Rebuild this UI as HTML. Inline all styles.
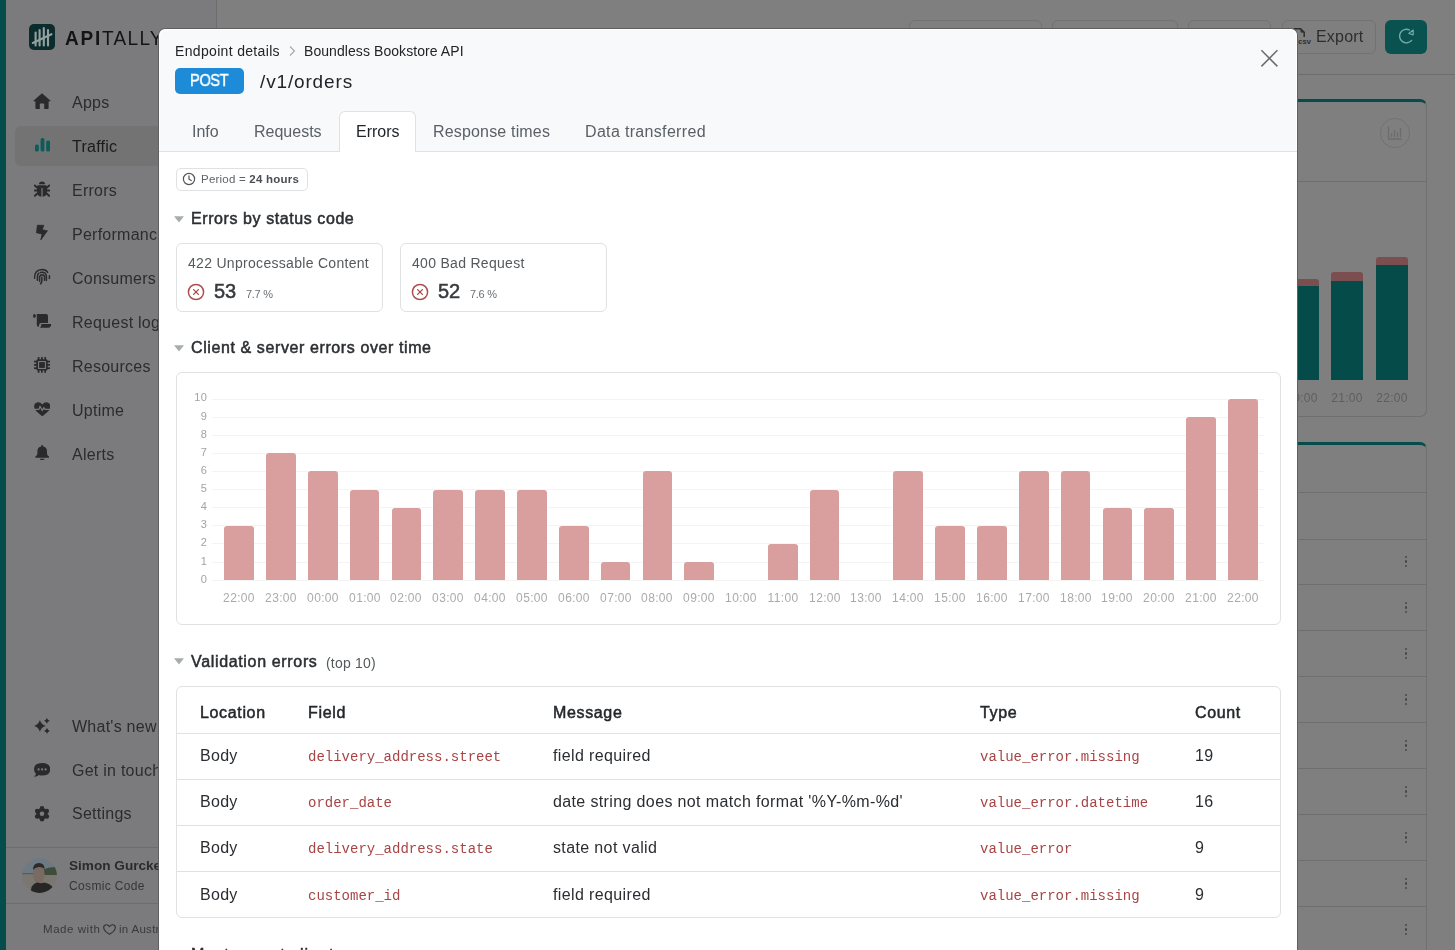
<!DOCTYPE html>
<html><head><meta charset="utf-8">
<style>
*{box-sizing:border-box;margin:0;padding:0}
html,body{width:1455px;height:950px;overflow:hidden;background:#7f7f7f;font-family:"Liberation Sans",sans-serif;position:relative}
.t{position:absolute;white-space:nowrap;will-change:transform}
.r{position:absolute}
</style></head><body>
<div class="r" style="left:0.00px;top:0.00px;width:6.00px;height:950.00px;background:#054d4c"></div>
<div class="r" style="left:6.00px;top:0.00px;width:210.00px;height:950.00px;background:#7b7b7d"></div>
<div class="r" style="left:216.00px;top:0.00px;width:1.00px;height:950.00px;background:#6d6d6d"></div>
<div class="r" style="left:29.00px;top:24.00px;width:26.00px;height:26.00px;background:#0b2c2d;border-radius:5px"></div>
<svg class="r" style="left:29.00px;top:24.00px;" width="26" height="26" viewBox="0 0 26 26"><g stroke="#93a09f" stroke-width="2.1" stroke-linecap="round"><line x1="6.6" y1="8.5" x2="6.6" y2="21.5"/><line x1="10.6" y1="6" x2="10.6" y2="21.5"/><line x1="14.8" y1="4" x2="14.8" y2="21.5"/><line x1="19" y1="6" x2="19" y2="21.5"/><line x1="3.8" y1="19" x2="22.5" y2="10.2"/></g></svg>
<div class="t" style="left:64.50px;top:28.72px;font-size:19px;line-height:19px;font-weight:400;color:#141414;font-family:'Liberation Sans';transform:scaleY(1.08);transform-origin:0 80%"><span style="font-weight:700;letter-spacing:1.8px">API</span><span style="font-weight:400;letter-spacing:1.3px">TALLY</span></div>
<div class="r" style="left:15.00px;top:125.50px;width:285.00px;height:40.00px;background:#737373;border-radius:6px"></div>
<div class="t" style="left:72.00px;top:94.76px;font-size:16px;line-height:16px;font-weight:400;color:#2c2c2c;font-family:'Liberation Sans';letter-spacing:0.25px">Apps</div>
<div class="t" style="left:72.00px;top:138.76px;font-size:16px;line-height:16px;font-weight:400;color:#1b1b1b;font-family:'Liberation Sans';letter-spacing:0.25px">Traffic</div>
<div class="t" style="left:72.00px;top:182.76px;font-size:16px;line-height:16px;font-weight:400;color:#2c2c2c;font-family:'Liberation Sans';letter-spacing:0.25px">Errors</div>
<div class="t" style="left:72.00px;top:226.76px;font-size:16px;line-height:16px;font-weight:400;color:#2c2c2c;font-family:'Liberation Sans';letter-spacing:0.25px">Performance</div>
<div class="t" style="left:72.00px;top:270.76px;font-size:16px;line-height:16px;font-weight:400;color:#2c2c2c;font-family:'Liberation Sans';letter-spacing:0.25px">Consumers</div>
<div class="t" style="left:72.00px;top:314.76px;font-size:16px;line-height:16px;font-weight:400;color:#2c2c2c;font-family:'Liberation Sans';letter-spacing:0.25px">Request logs</div>
<div class="t" style="left:72.00px;top:358.76px;font-size:16px;line-height:16px;font-weight:400;color:#2c2c2c;font-family:'Liberation Sans';letter-spacing:0.25px">Resources</div>
<div class="t" style="left:72.00px;top:402.76px;font-size:16px;line-height:16px;font-weight:400;color:#2c2c2c;font-family:'Liberation Sans';letter-spacing:0.25px">Uptime</div>
<div class="t" style="left:72.00px;top:446.76px;font-size:16px;line-height:16px;font-weight:400;color:#2c2c2c;font-family:'Liberation Sans';letter-spacing:0.25px">Alerts</div>
<div class="t" style="left:72.00px;top:718.86px;font-size:16px;line-height:16px;font-weight:400;color:#2c2c2c;font-family:'Liberation Sans';letter-spacing:0.25px">What's new</div>
<div class="t" style="left:72.00px;top:762.66px;font-size:16px;line-height:16px;font-weight:400;color:#2c2c2c;font-family:'Liberation Sans';letter-spacing:0.25px">Get in touch</div>
<div class="t" style="left:72.00px;top:806.46px;font-size:16px;line-height:16px;font-weight:400;color:#2c2c2c;font-family:'Liberation Sans';letter-spacing:0.25px">Settings</div>
<svg class="r" style="left:33.00px;top:92.50px;" width="18" height="16" viewBox="0 0 18 16"><g fill="#2a2a2a"><path d="M9 0.3 L17.8 8 L16 8.6 L15.6 8.3 L15.6 15.2 Q15.6 16 14.8 16 L11.2 16 L11.2 11 Q11.2 10.4 10.6 10.4 L7.4 10.4 Q6.8 10.4 6.8 11 L6.8 16 L3.2 16 Q2.4 16 2.4 15.2 L2.4 8.3 L2 8.6 L0.2 8 Z"/></g></svg>
<svg class="r" style="left:34.60px;top:138.00px;" width="15" height="13.5" viewBox="0 0 15 13.5"><g fill="#0b5d5a"><rect x="0" y="6.4" width="3.8" height="7.1" rx="1.6"/><rect x="5.6" y="0" width="3.8" height="13.5" rx="1.6"/><rect x="11.2" y="2.6" width="3.8" height="10.9" rx="1.6"/></g></svg>
<svg class="r" style="left:34.00px;top:180.80px;" width="16" height="16" viewBox="0 0 16 16"><g fill="#2a2a2a"><path d="M5 3.2 Q5 0.4 8 0.4 Q11 0.4 11 3.2 Z"/><path d="M4.2 4.2 L11.8 4.2 Q13 4.2 13 6.5 L13 10 Q13 15.5 8.6 15.8 L8.6 7 L7.4 7 L7.4 15.8 Q3 15.5 3 10 L3 6.5 Q3 4.2 4.2 4.2Z"/><g stroke="#2a2a2a" stroke-width="1.9" stroke-linecap="round"><line x1="3" y1="6.5" x2="0.8" y2="4.5"/><line x1="13" y1="6.5" x2="15.2" y2="4.5"/><line x1="3" y1="9.5" x2="0.6" y2="9.5"/><line x1="13" y1="9.5" x2="15.4" y2="9.5"/><line x1="3.4" y1="12.5" x2="0.9" y2="14.8"/><line x1="12.6" y1="12.5" x2="15.1" y2="14.8"/></g></g></svg>
<svg class="r" style="left:30.00px;top:220.00px;" width="24" height="24" viewBox="30 220 24 24"><path fill="#2a2a2a" stroke="#2a2a2a" stroke-width="0.8" stroke-linejoin="round" d="M37.4 225.3 L43.8 225.3 L42.2 229.8 L47.4 230.8 L40.8 239.9 L42.1 233.9 L36.5 232.8 Z"/></svg>
<svg class="r" style="left:30.00px;top:265.00px;" width="24" height="24" viewBox="30 265 24 24"><g fill="none" stroke="#2a2a2a" stroke-width="1.5" stroke-linecap="round"><path d="M34.6 278.2 Q34.2 269.6 42.4 269.5 Q46 269.6 47.6 272.3"/><path d="M49.4 275.7 L49.4 278.5"/><path d="M37.4 280.2 L37.5 275.6 Q37.8 274 38.8 273.2"/><path d="M40.4 272.5 Q46 271.4 46.4 276.2 L46.4 280.4"/><path d="M39.6 281.2 L39.6 277.2 Q39.9 274.7 42.3 274.7 Q44.6 274.8 44.6 277.4 L44.5 280.2"/><path d="M41.9 277.3 L41.9 280.6 Q41.7 282.8 40.5 283.8"/></g></svg>
<svg class="r" style="left:30.00px;top:309.00px;" width="24" height="24" viewBox="30 309 24 24"><g fill="#2a2a2a"><ellipse cx="34.4" cy="315.9" rx="1.4" ry="1.9"/><path d="M36.8 314 L46 314 Q48 314 48 316 L48 323 L41 323 Q39.5 323 39.2 324.6 L38.8 326.9 Q36.9 326.7 36.8 325Z"/><path d="M41.3 324 L51.2 324 Q51 327.8 48.4 327.8 L40 327.8 Q41.6 326.4 41.3 324Z"/></g></svg>
<svg class="r" style="left:30.00px;top:353.00px;" width="24" height="24" viewBox="30 353 24 24"><g stroke="#2a2a2a" stroke-width="1.7"><line x1="38.6" y1="357" x2="38.6" y2="360"/><line x1="38.6" y1="369.8" x2="38.6" y2="372.8"/><line x1="41.9" y1="357" x2="41.9" y2="360"/><line x1="41.9" y1="369.8" x2="41.9" y2="372.8"/><line x1="45.2" y1="357" x2="45.2" y2="360"/><line x1="45.2" y1="369.8" x2="45.2" y2="372.8"/><line x1="34" y1="361.6" x2="37" y2="361.6"/><line x1="47" y1="361.6" x2="50" y2="361.6"/><line x1="34" y1="364.9" x2="37" y2="364.9"/><line x1="47" y1="364.9" x2="50" y2="364.9"/><line x1="34" y1="368.2" x2="37" y2="368.2"/><line x1="47" y1="368.2" x2="50" y2="368.2"/></g><rect x="36.3" y="359.3" width="11.4" height="11.1" rx="1.6" fill="#2a2a2a"/><rect x="38" y="361" width="8" height="8" rx="0.6" fill="#7b7b7d"/><rect x="39.1" y="362.1" width="5.8" height="5.8" fill="#2a2a2a"/></svg>
<svg class="r" style="left:33.80px;top:402.10px;" width="16.6" height="14.4" viewBox="0 0 16.6 14.4"><path fill="#2a2a2a" d="M8.3 2.6 Q10.2 0 12.6 0.2 Q16.4 0.6 16.5 4.6 Q16.5 7.6 14 9.6 L8.3 14.4 L2.6 9.6 Q0.1 7.6 0.1 4.6 Q0.2 0.6 4 0.2 Q6.4 0 8.3 2.6Z"/><path d="M0 7.4 L5 7.4 L6 4.2 L8.2 8.6 L9.8 5.6 L11 7.4 L16.6 7.4" fill="none" stroke="#7b7b7d" stroke-width="1.2" stroke-linejoin="round"/></svg>
<svg class="r" style="left:35.00px;top:445.20px;" width="14.4" height="15" viewBox="0 0 14.4 15"><g fill="#2a2a2a"><path d="M7.2 0 Q8.1 0 8.1 0.9 L8.1 1.6 Q12 2.3 12 6.6 L12 8.6 Q12 10.4 14 11.6 Q14.4 12.8 13.4 12.8 L1 12.8 Q0 12.8 0.4 11.6 Q2.4 10.4 2.4 8.6 L2.4 6.6 Q2.4 2.3 6.3 1.6 L6.3 0.9 Q6.3 0 7.2 0Z"/><path d="M5 13.8 L9.4 13.8 Q9.2 15.6 7.2 15.6 Q5.2 15.6 5 13.8Z"/></g></svg>
<svg class="r" style="left:30.00px;top:714.00px;" width="24" height="24" viewBox="30 714 24 24"><path fill="#2a2a2a" d="M39.9 720.1 Q41.176 724.624 45.699999999999996 725.9 Q41.176 727.1759999999999 39.9 731.6999999999999 Q38.623999999999995 727.1759999999999 34.1 725.9 Q38.623999999999995 724.624 39.9 720.1ZM46.9 717.9 Q47.538 720.1619999999999 49.8 720.8 Q47.538 721.438 46.9 723.6999999999999 Q46.262 721.438 44.0 720.8 Q46.262 720.1619999999999 46.9 717.9ZM47.0 728.0 Q47.638 730.262 49.9 730.9 Q47.638 731.538 47.0 733.8 Q46.362 731.538 44.1 730.9 Q46.362 730.262 47.0 728.0Z"/></svg>
<svg class="r" style="left:33.80px;top:763.00px;" width="16.2" height="13.8" viewBox="0 0 16.2 13.8"><path fill="#2a2a2a" d="M8.1 0 Q16.2 0 16.2 6.3 Q16.2 12.6 8.1 12.6 Q6.4 12.6 5 12.1 Q3 13.5 0 13.9 Q1.8 12.2 2 10.8 Q0 9 0 6.3 Q0 0 8.1 0Z"/><g fill="#7b7b7d"><circle cx="4.6" cy="6.4" r="1.1"/><circle cx="8.1" cy="6.4" r="1.1"/><circle cx="11.6" cy="6.4" r="1.1"/></g></svg>
<svg class="r" style="left:30.00px;top:802.00px;" width="24" height="24" viewBox="30 802 24 24"><g fill="#2a2a2a"><circle cx="42.00" cy="808.15" r="2.25"/><circle cx="46.85" cy="810.95" r="2.25"/><circle cx="46.85" cy="816.55" r="2.25"/><circle cx="42.00" cy="819.35" r="2.25"/><circle cx="37.15" cy="816.55" r="2.25"/><circle cx="37.15" cy="810.95" r="2.25"/><circle cx="42" cy="813.75" r="5.8"/></g><circle cx="42" cy="813.75" r="2.3" fill="#7b7b7d"/></svg>
<div class="r" style="left:6.00px;top:846.60px;width:210.00px;height:1.00px;background:#6d6d6d"></div>
<div class="r" style="left:6.00px;top:903.00px;width:210.00px;height:1.00px;background:#6d6d6d"></div>
<svg class="r" style="left:21.90px;top:857.90px;" width="35" height="35" viewBox="0 0 35 35"><defs><clipPath id="av"><circle cx="17.5" cy="17.5" r="17.4"/></clipPath></defs><g clip-path="url(#av)"><rect x="0" y="0" width="35" height="16" fill="#6d7a83"/><rect x="0" y="15.5" width="35" height="20" fill="#7a7770"/><path d="M20 12 Q27 8.5 35 9 L35 17 L20 17Z" fill="#3f4b3b"/><rect x="0" y="15" width="12" height="1.2" fill="#555c5c"/><ellipse cx="16.8" cy="16" rx="5.8" ry="9.6" fill="#796a62"/><path d="M11 12 Q11 5 17 5 Q22.6 5 22.6 11 Q20 8.6 16.5 9 Q13 9.4 11 12Z" fill="#2e2a28"/><path d="M8.5 35 L9.5 29 Q12 25 15.5 24.6 Q19 26 22 24.6 Q28 25.5 31.5 30 L31.5 35Z" fill="#262626"/></g></svg>
<div class="t" style="left:69.00px;top:859.49px;font-size:13.6px;line-height:13.6px;font-weight:700;color:#2b2b2b;font-family:'Liberation Sans';letter-spacing:0px">Simon Gurcke</div>
<div class="t" style="left:69.00px;top:879.84px;font-size:12px;line-height:12px;font-weight:400;color:#363636;font-family:'Liberation Sans';letter-spacing:0.35px">Cosmic Code</div>
<div class="t" style="left:42.50px;top:924.07px;font-size:11.5px;line-height:11.5px;font-weight:400;color:#3a3a3a;font-family:'Liberation Sans';letter-spacing:0.55px">Made with</div>
<svg class="r" style="left:102.60px;top:923.60px;" width="13" height="11" viewBox="0 0 13 11"><path d="M6.5 2.6 Q8 0.6 10 0.8 Q12.4 1.2 12.3 3.8 Q12.2 5.8 10.2 7.6 L6.5 10.4 L2.8 7.6 Q0.8 5.8 0.7 3.8 Q0.6 1.2 3 0.8 Q5 0.6 6.5 2.6Z" fill="none" stroke="#333" stroke-width="1.15" stroke-linejoin="round"/></svg>
<div class="t" style="left:118.60px;top:924.07px;font-size:11.5px;line-height:11.5px;font-weight:400;color:#3a3a3a;font-family:'Liberation Sans';letter-spacing:0.3px">in Austria</div>
<div class="r" style="left:217.00px;top:73.80px;width:1238.00px;height:1.00px;background:#6d6d6d"></div>
<div class="r" style="left:909.00px;top:20.30px;width:133.40px;height:33.90px;border:1px solid #727272;border-radius:6px"></div>
<div class="r" style="left:1051.80px;top:20.30px;width:126.70px;height:33.90px;border:1px solid #727272;border-radius:6px"></div>
<div class="r" style="left:1187.50px;top:20.30px;width:83.50px;height:33.90px;border:1px solid #727272;border-radius:6px"></div>
<div class="r" style="left:1281.60px;top:20.30px;width:94.80px;height:33.90px;border:1px solid #727272;border-radius:6px"></div>
<div class="r" style="left:926.50px;top:27.60px;width:6.00px;height:5.40px;background:#2e2e2e;border-radius:50%"></div>
<div class="r" style="left:1070.00px;top:27.60px;width:6.00px;height:5.40px;background:#2e2e2e;border-radius:50%"></div>
<div class="t" style="left:1315.70px;top:29.36px;font-size:16px;line-height:16px;font-weight:400;color:#2e2e2e;font-family:'Liberation Sans';letter-spacing:0.2px">Export</div>
<svg class="r" style="left:1290.00px;top:22.00px;" width="26" height="26" viewBox="1290 22 26 26"><path d="M1293.6 28.7 L1300.6 28.7 L1304.2 32.3 L1304.2 37" fill="none" stroke="#2e2e2e" stroke-width="1.5" stroke-linejoin="round"/><path d="M1300.2 28.7 L1304.2 32.7 L1300.8 32.4Z" fill="#2e2e2e"/><text x="1298" y="44" font-family="Liberation Mono" font-size="7.6" font-weight="700" fill="#2e2e2e" letter-spacing="-0.3">csv</text></svg>
<div class="r" style="left:1385.00px;top:19.80px;width:42.00px;height:34.10px;background:#0a5250;border-radius:6px"></div>
<svg class="r" style="left:1397.00px;top:27.00px;" width="18" height="18" viewBox="0 0 18 18"><path d="M12.3 2.9 A6.8 6.8 0 1 0 14.6 13.4" fill="none" stroke="#74aaa7" stroke-width="1.4" stroke-linecap="round"/><path d="M16.2 3 L11.8 6.5 L16.2 7.8Z" fill="none" stroke="#74aaa7" stroke-width="1.2" stroke-linejoin="round"/></svg>
<div class="r" style="left:240.00px;top:99.00px;width:1187.00px;height:318.20px;border:1px solid #6f6f6f;border-top:3px solid #054d4c;border-radius:7px"></div>
<div class="r" style="left:240.00px;top:180.50px;width:1186.00px;height:1.00px;background:#6f6f6f"></div>
<svg class="r" style="left:1379.00px;top:117.00px;" width="32" height="32" viewBox="0 0 32 32"><circle cx="16" cy="16" r="14.6" fill="none" stroke="#727272" stroke-width="1"/><g stroke="#6c6c6c" stroke-width="1.3" fill="none"><path d="M9.5 9.5 L9.5 22 L22.5 22"/><line x1="12.5" y1="20" x2="12.5" y2="16"/><line x1="15.5" y1="20" x2="15.5" y2="13"/><line x1="18.5" y1="20" x2="18.5" y2="15"/><line x1="21.5" y1="20" x2="21.5" y2="11"/></g></svg>
<div class="r" style="left:1286.00px;top:279.00px;width:32.60px;height:100.60px;background:#7b4f4f;border-radius:3px 3px 0 0"></div>
<div class="r" style="left:1286.00px;top:285.80px;width:32.60px;height:93.80px;background:#054b4a"></div>
<div class="r" style="left:1331.20px;top:272.40px;width:31.80px;height:107.20px;background:#7b4f4f;border-radius:3px 3px 0 0"></div>
<div class="r" style="left:1331.20px;top:280.80px;width:31.80px;height:98.80px;background:#054b4a"></div>
<div class="r" style="left:1376.00px;top:256.80px;width:31.80px;height:122.80px;background:#7b4f4f;border-radius:3px 3px 0 0"></div>
<div class="r" style="left:1376.00px;top:265.00px;width:31.80px;height:114.60px;background:#054b4a"></div>
<div class="t" style="left:1147.00px;width:400px;text-align:center;top:392.04px;font-size:12px;line-height:12px;font-weight:400;color:#5e5e5e;font-family:'Liberation Sans';letter-spacing:0.3px">21:00</div>
<div class="t" style="left:1192.00px;width:400px;text-align:center;top:392.04px;font-size:12px;line-height:12px;font-weight:400;color:#5e5e5e;font-family:'Liberation Sans';letter-spacing:0.3px">22:00</div>
<div class="t" style="left:1102.00px;width:400px;text-align:center;top:392.04px;font-size:12px;line-height:12px;font-weight:400;color:#5e5e5e;font-family:'Liberation Sans';letter-spacing:0.3px">20:00</div>
<div class="r" style="left:240.00px;top:442.40px;width:1186.60px;height:757.60px;border:1px solid #6f6f6f;border-top:3.5px solid #054d4c;border-radius:7px"></div>
<div class="r" style="left:240.00px;top:491.50px;width:1186.00px;height:1.00px;background:#6f6f6f"></div>
<div class="r" style="left:240.00px;top:538.50px;width:1186.00px;height:1.00px;background:#6f6f6f"></div>
<div class="r" style="left:240.00px;top:584.40px;width:1186.00px;height:1.00px;background:#6f6f6f"></div>
<div class="r" style="left:240.00px;top:630.40px;width:1186.00px;height:1.00px;background:#6f6f6f"></div>
<div class="r" style="left:240.00px;top:676.40px;width:1186.00px;height:1.00px;background:#6f6f6f"></div>
<div class="r" style="left:240.00px;top:722.40px;width:1186.00px;height:1.00px;background:#6f6f6f"></div>
<div class="r" style="left:240.00px;top:768.40px;width:1186.00px;height:1.00px;background:#6f6f6f"></div>
<div class="r" style="left:240.00px;top:814.40px;width:1186.00px;height:1.00px;background:#6f6f6f"></div>
<div class="r" style="left:240.00px;top:860.40px;width:1186.00px;height:1.00px;background:#6f6f6f"></div>
<div class="r" style="left:240.00px;top:906.40px;width:1186.00px;height:1.00px;background:#6f6f6f"></div>
<div class="r" style="left:1404.70px;top:555.85px;width:2.10px;height:2.10px;background:#484848;border-radius:50%"></div>
<div class="r" style="left:1404.70px;top:560.45px;width:2.10px;height:2.10px;background:#484848;border-radius:50%"></div>
<div class="r" style="left:1404.70px;top:565.05px;width:2.10px;height:2.10px;background:#484848;border-radius:50%"></div>
<div class="r" style="left:1404.70px;top:601.85px;width:2.10px;height:2.10px;background:#484848;border-radius:50%"></div>
<div class="r" style="left:1404.70px;top:606.45px;width:2.10px;height:2.10px;background:#484848;border-radius:50%"></div>
<div class="r" style="left:1404.70px;top:611.05px;width:2.10px;height:2.10px;background:#484848;border-radius:50%"></div>
<div class="r" style="left:1404.70px;top:647.85px;width:2.10px;height:2.10px;background:#484848;border-radius:50%"></div>
<div class="r" style="left:1404.70px;top:652.45px;width:2.10px;height:2.10px;background:#484848;border-radius:50%"></div>
<div class="r" style="left:1404.70px;top:657.05px;width:2.10px;height:2.10px;background:#484848;border-radius:50%"></div>
<div class="r" style="left:1404.70px;top:693.85px;width:2.10px;height:2.10px;background:#484848;border-radius:50%"></div>
<div class="r" style="left:1404.70px;top:698.45px;width:2.10px;height:2.10px;background:#484848;border-radius:50%"></div>
<div class="r" style="left:1404.70px;top:703.05px;width:2.10px;height:2.10px;background:#484848;border-radius:50%"></div>
<div class="r" style="left:1404.70px;top:739.85px;width:2.10px;height:2.10px;background:#484848;border-radius:50%"></div>
<div class="r" style="left:1404.70px;top:744.45px;width:2.10px;height:2.10px;background:#484848;border-radius:50%"></div>
<div class="r" style="left:1404.70px;top:749.05px;width:2.10px;height:2.10px;background:#484848;border-radius:50%"></div>
<div class="r" style="left:1404.70px;top:785.85px;width:2.10px;height:2.10px;background:#484848;border-radius:50%"></div>
<div class="r" style="left:1404.70px;top:790.45px;width:2.10px;height:2.10px;background:#484848;border-radius:50%"></div>
<div class="r" style="left:1404.70px;top:795.05px;width:2.10px;height:2.10px;background:#484848;border-radius:50%"></div>
<div class="r" style="left:1404.70px;top:831.85px;width:2.10px;height:2.10px;background:#484848;border-radius:50%"></div>
<div class="r" style="left:1404.70px;top:836.45px;width:2.10px;height:2.10px;background:#484848;border-radius:50%"></div>
<div class="r" style="left:1404.70px;top:841.05px;width:2.10px;height:2.10px;background:#484848;border-radius:50%"></div>
<div class="r" style="left:1404.70px;top:877.85px;width:2.10px;height:2.10px;background:#484848;border-radius:50%"></div>
<div class="r" style="left:1404.70px;top:882.45px;width:2.10px;height:2.10px;background:#484848;border-radius:50%"></div>
<div class="r" style="left:1404.70px;top:887.05px;width:2.10px;height:2.10px;background:#484848;border-radius:50%"></div>
<div class="r" style="left:1404.70px;top:923.85px;width:2.10px;height:2.10px;background:#484848;border-radius:50%"></div>
<div class="r" style="left:1404.70px;top:928.45px;width:2.10px;height:2.10px;background:#484848;border-radius:50%"></div>
<div class="r" style="left:1404.70px;top:933.05px;width:2.10px;height:2.10px;background:#484848;border-radius:50%"></div>
<div class="r" style="left:158.00px;top:28.00px;width:1140.00px;height:972.00px;background:#fff;border:1px solid #606060;border-bottom:none;border-radius:7px 7px 0 0"></div>
<div class="r" style="left:160.00px;top:30.00px;width:1136.00px;height:121.00px;background:#f8f9fa;border-radius:6px 6px 0 0"></div>
<div class="r" style="left:159.00px;top:151.00px;width:1138.00px;height:1.00px;background:#e0e1e3"></div>
<svg class="r" style="left:1260.00px;top:48.50px;" width="19" height="19" viewBox="0 0 19 19"><g stroke="#6b6b6b" stroke-width="1.5" stroke-linecap="butt"><line x1="1.4" y1="1.3" x2="17.4" y2="17.4"/><line x1="17.4" y1="1.3" x2="1.4" y2="17.4"/></g></svg>
<div class="t" style="left:174.70px;top:43.65px;font-size:14px;line-height:14px;font-weight:400;color:#212529;font-family:'Liberation Sans';letter-spacing:0.33px">Endpoint details</div>
<svg class="r" style="left:287.50px;top:45.00px;" width="9" height="12" viewBox="0 0 9 12"><path d="M2 1.5 L6.5 6 L2 10.5" fill="none" stroke="#a8a8a8" stroke-width="1.1"/></svg>
<div class="t" style="left:304.00px;top:43.65px;font-size:14px;line-height:14px;font-weight:400;color:#212529;font-family:'Liberation Sans';letter-spacing:0.07px">Boundless Bookstore API</div>
<div class="r" style="left:175.00px;top:68.00px;width:69.00px;height:26.00px;background:#1d8bd8;border-radius:5px"></div>
<div class="t" style="left:190.40px;top:72.66px;font-size:16px;line-height:16px;font-weight:400;color:#ffffff;font-family:'Liberation Sans';-webkit-text-stroke:0.45px #fff;letter-spacing:-0.5px;transform:scaleX(0.92);transform-origin:0 0">POST</div>
<div class="t" style="left:260.00px;top:71.52px;font-size:19px;line-height:19px;font-weight:400;color:#212529;font-family:'Liberation Sans';letter-spacing:0.85px">/v1/orders</div>
<div class="r" style="left:338.6px;top:110.7px;width:77px;height:41.5px;background:#fff;border:1px solid #e0e1e3;border-bottom:none;border-radius:6px 6px 0 0"></div>
<div class="t" style="left:192.00px;top:123.86px;font-size:16px;line-height:16px;font-weight:400;color:#5a6066;font-family:'Liberation Sans';">Info</div>
<div class="t" style="left:253.50px;top:123.86px;font-size:16px;line-height:16px;font-weight:400;color:#5a6066;font-family:'Liberation Sans';">Requests</div>
<div class="t" style="left:355.70px;top:123.86px;font-size:16px;line-height:16px;font-weight:400;color:#212529;font-family:'Liberation Sans';">Errors</div>
<div class="t" style="left:433.00px;top:123.86px;font-size:16px;line-height:16px;font-weight:400;color:#5a6066;font-family:'Liberation Sans';letter-spacing:0.17px">Response times</div>
<div class="t" style="left:585.00px;top:123.86px;font-size:16px;line-height:16px;font-weight:400;color:#5a6066;font-family:'Liberation Sans';letter-spacing:0.33px">Data transferred</div>
<div class="r" style="left:175.5px;top:168px;width:132px;height:22.6px;border:1px solid #e0e1e3;border-radius:5px"></div>
<svg class="r" style="left:182.00px;top:172.00px;" width="14" height="14" viewBox="0 0 14 14"><circle cx="7" cy="7" r="5.6" fill="none" stroke="#555" stroke-width="1.2"/><path d="M7 3.8 L7 7.2 L9.2 8.6" fill="none" stroke="#555" stroke-width="1.2" stroke-linecap="round"/></svg>
<div class="t" style="left:201.40px;top:173.87px;font-size:11.5px;line-height:11.5px;font-weight:400;color:#5f6468;font-family:'Liberation Sans';letter-spacing:0.22px">Period = <b style="font-weight:700;color:#4a4f54">24 hours</b></div>
<svg class="r" style="left:174.30px;top:215.80px;" width="10" height="7" viewBox="0 0 10 7"><path d="M0 0.3 L10 0.3 L5 6.5Z" fill="#a7adad"/></svg>
<div class="t" style="left:191.00px;top:211.06px;font-size:16px;line-height:16px;font-weight:400;color:#2b2e31;font-family:'Liberation Sans';-webkit-text-stroke:0.5px #2b2e31;letter-spacing:0.58px">Errors by status code</div>
<div class="r" style="left:175.5px;top:243.3px;width:207px;height:69.2px;border:1px solid #e0e1e3;border-radius:6px"></div>
<div class="t" style="left:188.00px;top:256.15px;font-size:14px;line-height:14px;font-weight:400;color:#55595c;font-family:'Liberation Sans';letter-spacing:0.3px">422 Unprocessable Content</div>
<svg class="r" style="left:187.20px;top:282.80px;" width="18" height="18" viewBox="0 0 18 18"><circle cx="9" cy="9" r="7.6" fill="none" stroke="#ab5150" stroke-width="1.5"/><g stroke="#a24a4a" stroke-width="1.3" stroke-linecap="round"><line x1="6.6" y1="6.6" x2="11.4" y2="11.4"/><line x1="11.4" y1="6.6" x2="6.6" y2="11.4"/></g></svg>
<div class="t" style="left:213.60px;top:280.57px;font-size:20px;line-height:20px;font-weight:400;color:#383b3e;font-family:'Liberation Sans';-webkit-text-stroke:0.55px #383b3e">53</div>
<div class="t" style="left:245.60px;top:289.09px;font-size:11px;line-height:11px;font-weight:400;color:#6c7075;font-family:'Liberation Sans';letter-spacing:-0.3px">7.7 %</div>
<div class="r" style="left:399.5px;top:243.3px;width:207px;height:69.2px;border:1px solid #e0e1e3;border-radius:6px"></div>
<div class="t" style="left:412.00px;top:256.15px;font-size:14px;line-height:14px;font-weight:400;color:#55595c;font-family:'Liberation Sans';letter-spacing:0.3px">400 Bad Request</div>
<svg class="r" style="left:411.20px;top:282.80px;" width="18" height="18" viewBox="0 0 18 18"><circle cx="9" cy="9" r="7.6" fill="none" stroke="#ab5150" stroke-width="1.5"/><g stroke="#a24a4a" stroke-width="1.3" stroke-linecap="round"><line x1="6.6" y1="6.6" x2="11.4" y2="11.4"/><line x1="11.4" y1="6.6" x2="6.6" y2="11.4"/></g></svg>
<div class="t" style="left:437.60px;top:280.57px;font-size:20px;line-height:20px;font-weight:400;color:#383b3e;font-family:'Liberation Sans';-webkit-text-stroke:0.55px #383b3e">52</div>
<div class="t" style="left:469.60px;top:289.09px;font-size:11px;line-height:11px;font-weight:400;color:#6c7075;font-family:'Liberation Sans';letter-spacing:-0.3px">7.6 %</div>
<svg class="r" style="left:174.30px;top:345.00px;" width="10" height="7" viewBox="0 0 10 7"><path d="M0 0.3 L10 0.3 L5 6.5Z" fill="#a7adad"/></svg>
<div class="t" style="left:191.00px;top:340.26px;font-size:16px;line-height:16px;font-weight:400;color:#2b2e31;font-family:'Liberation Sans';-webkit-text-stroke:0.5px #2b2e31;letter-spacing:0.6px">Client &amp; server errors over time</div>
<div class="r" style="left:175.5px;top:372px;width:1105.5px;height:253px;border:1px solid #e0e1e3;border-radius:6px"></div>
<div class="r" style="left:211.70px;top:579.70px;width:1052.50px;height:1.00px;background:#f4f4f4"></div>
<div class="t" style="left:-193.20px;width:400px;text-align:right;top:573.69px;font-size:11px;line-height:11px;font-weight:400;color:#a3a3a3;font-family:'Liberation Sans';letter-spacing:0.2px">0</div>
<div class="r" style="left:211.70px;top:561.58px;width:1052.50px;height:1.00px;background:#f4f4f4"></div>
<div class="t" style="left:-193.20px;width:400px;text-align:right;top:555.57px;font-size:11px;line-height:11px;font-weight:400;color:#a3a3a3;font-family:'Liberation Sans';letter-spacing:0.2px">1</div>
<div class="r" style="left:211.70px;top:543.46px;width:1052.50px;height:1.00px;background:#f4f4f4"></div>
<div class="t" style="left:-193.20px;width:400px;text-align:right;top:537.45px;font-size:11px;line-height:11px;font-weight:400;color:#a3a3a3;font-family:'Liberation Sans';letter-spacing:0.2px">2</div>
<div class="r" style="left:211.70px;top:525.34px;width:1052.50px;height:1.00px;background:#f4f4f4"></div>
<div class="t" style="left:-193.20px;width:400px;text-align:right;top:519.33px;font-size:11px;line-height:11px;font-weight:400;color:#a3a3a3;font-family:'Liberation Sans';letter-spacing:0.2px">3</div>
<div class="r" style="left:211.70px;top:507.22px;width:1052.50px;height:1.00px;background:#f4f4f4"></div>
<div class="t" style="left:-193.20px;width:400px;text-align:right;top:501.21px;font-size:11px;line-height:11px;font-weight:400;color:#a3a3a3;font-family:'Liberation Sans';letter-spacing:0.2px">4</div>
<div class="r" style="left:211.70px;top:489.10px;width:1052.50px;height:1.00px;background:#f4f4f4"></div>
<div class="t" style="left:-193.20px;width:400px;text-align:right;top:483.09px;font-size:11px;line-height:11px;font-weight:400;color:#a3a3a3;font-family:'Liberation Sans';letter-spacing:0.2px">5</div>
<div class="r" style="left:211.70px;top:470.98px;width:1052.50px;height:1.00px;background:#f4f4f4"></div>
<div class="t" style="left:-193.20px;width:400px;text-align:right;top:464.97px;font-size:11px;line-height:11px;font-weight:400;color:#a3a3a3;font-family:'Liberation Sans';letter-spacing:0.2px">6</div>
<div class="r" style="left:211.70px;top:452.86px;width:1052.50px;height:1.00px;background:#f4f4f4"></div>
<div class="t" style="left:-193.20px;width:400px;text-align:right;top:446.85px;font-size:11px;line-height:11px;font-weight:400;color:#a3a3a3;font-family:'Liberation Sans';letter-spacing:0.2px">7</div>
<div class="r" style="left:211.70px;top:434.74px;width:1052.50px;height:1.00px;background:#f4f4f4"></div>
<div class="t" style="left:-193.20px;width:400px;text-align:right;top:428.73px;font-size:11px;line-height:11px;font-weight:400;color:#a3a3a3;font-family:'Liberation Sans';letter-spacing:0.2px">8</div>
<div class="r" style="left:211.70px;top:416.62px;width:1052.50px;height:1.00px;background:#f4f4f4"></div>
<div class="t" style="left:-193.20px;width:400px;text-align:right;top:410.61px;font-size:11px;line-height:11px;font-weight:400;color:#a3a3a3;font-family:'Liberation Sans';letter-spacing:0.2px">9</div>
<div class="r" style="left:211.70px;top:398.50px;width:1052.50px;height:1.00px;background:#f4f4f4"></div>
<div class="t" style="left:-193.20px;width:400px;text-align:right;top:392.49px;font-size:11px;line-height:11px;font-weight:400;color:#a3a3a3;font-family:'Liberation Sans';letter-spacing:0.2px">10</div>
<div class="r" style="left:224.30px;top:525.84px;width:29.70px;height:54.36px;background:#d99f9e;border-radius:3px 3px 0 0"></div>
<div class="t" style="left:39.15px;width:400px;text-align:center;top:592.24px;font-size:12px;line-height:12px;font-weight:400;color:#aaaaaa;font-family:'Liberation Sans';letter-spacing:0.35px">22:00</div>
<div class="r" style="left:266.12px;top:453.36px;width:29.70px;height:126.84px;background:#d99f9e;border-radius:3px 3px 0 0"></div>
<div class="t" style="left:80.97px;width:400px;text-align:center;top:592.24px;font-size:12px;line-height:12px;font-weight:400;color:#aaaaaa;font-family:'Liberation Sans';letter-spacing:0.35px">23:00</div>
<div class="r" style="left:307.94px;top:471.48px;width:29.70px;height:108.72px;background:#d99f9e;border-radius:3px 3px 0 0"></div>
<div class="t" style="left:122.79px;width:400px;text-align:center;top:592.24px;font-size:12px;line-height:12px;font-weight:400;color:#aaaaaa;font-family:'Liberation Sans';letter-spacing:0.35px">00:00</div>
<div class="r" style="left:349.76px;top:489.60px;width:29.70px;height:90.60px;background:#d99f9e;border-radius:3px 3px 0 0"></div>
<div class="t" style="left:164.61px;width:400px;text-align:center;top:592.24px;font-size:12px;line-height:12px;font-weight:400;color:#aaaaaa;font-family:'Liberation Sans';letter-spacing:0.35px">01:00</div>
<div class="r" style="left:391.58px;top:507.72px;width:29.70px;height:72.48px;background:#d99f9e;border-radius:3px 3px 0 0"></div>
<div class="t" style="left:206.43px;width:400px;text-align:center;top:592.24px;font-size:12px;line-height:12px;font-weight:400;color:#aaaaaa;font-family:'Liberation Sans';letter-spacing:0.35px">02:00</div>
<div class="r" style="left:433.40px;top:489.60px;width:29.70px;height:90.60px;background:#d99f9e;border-radius:3px 3px 0 0"></div>
<div class="t" style="left:248.25px;width:400px;text-align:center;top:592.24px;font-size:12px;line-height:12px;font-weight:400;color:#aaaaaa;font-family:'Liberation Sans';letter-spacing:0.35px">03:00</div>
<div class="r" style="left:475.22px;top:489.60px;width:29.70px;height:90.60px;background:#d99f9e;border-radius:3px 3px 0 0"></div>
<div class="t" style="left:290.07px;width:400px;text-align:center;top:592.24px;font-size:12px;line-height:12px;font-weight:400;color:#aaaaaa;font-family:'Liberation Sans';letter-spacing:0.35px">04:00</div>
<div class="r" style="left:517.04px;top:489.60px;width:29.70px;height:90.60px;background:#d99f9e;border-radius:3px 3px 0 0"></div>
<div class="t" style="left:331.89px;width:400px;text-align:center;top:592.24px;font-size:12px;line-height:12px;font-weight:400;color:#aaaaaa;font-family:'Liberation Sans';letter-spacing:0.35px">05:00</div>
<div class="r" style="left:558.86px;top:525.84px;width:29.70px;height:54.36px;background:#d99f9e;border-radius:3px 3px 0 0"></div>
<div class="t" style="left:373.71px;width:400px;text-align:center;top:592.24px;font-size:12px;line-height:12px;font-weight:400;color:#aaaaaa;font-family:'Liberation Sans';letter-spacing:0.35px">06:00</div>
<div class="r" style="left:600.68px;top:562.08px;width:29.70px;height:18.12px;background:#d99f9e;border-radius:3px 3px 0 0"></div>
<div class="t" style="left:415.53px;width:400px;text-align:center;top:592.24px;font-size:12px;line-height:12px;font-weight:400;color:#aaaaaa;font-family:'Liberation Sans';letter-spacing:0.35px">07:00</div>
<div class="r" style="left:642.50px;top:471.48px;width:29.70px;height:108.72px;background:#d99f9e;border-radius:3px 3px 0 0"></div>
<div class="t" style="left:457.35px;width:400px;text-align:center;top:592.24px;font-size:12px;line-height:12px;font-weight:400;color:#aaaaaa;font-family:'Liberation Sans';letter-spacing:0.35px">08:00</div>
<div class="r" style="left:684.32px;top:562.08px;width:29.70px;height:18.12px;background:#d99f9e;border-radius:3px 3px 0 0"></div>
<div class="t" style="left:499.17px;width:400px;text-align:center;top:592.24px;font-size:12px;line-height:12px;font-weight:400;color:#aaaaaa;font-family:'Liberation Sans';letter-spacing:0.35px">09:00</div>
<div class="t" style="left:540.99px;width:400px;text-align:center;top:592.24px;font-size:12px;line-height:12px;font-weight:400;color:#aaaaaa;font-family:'Liberation Sans';letter-spacing:0.35px">10:00</div>
<div class="r" style="left:767.96px;top:543.96px;width:29.70px;height:36.24px;background:#d99f9e;border-radius:3px 3px 0 0"></div>
<div class="t" style="left:582.81px;width:400px;text-align:center;top:592.24px;font-size:12px;line-height:12px;font-weight:400;color:#aaaaaa;font-family:'Liberation Sans';letter-spacing:0.35px">11:00</div>
<div class="r" style="left:809.78px;top:489.60px;width:29.70px;height:90.60px;background:#d99f9e;border-radius:3px 3px 0 0"></div>
<div class="t" style="left:624.63px;width:400px;text-align:center;top:592.24px;font-size:12px;line-height:12px;font-weight:400;color:#aaaaaa;font-family:'Liberation Sans';letter-spacing:0.35px">12:00</div>
<div class="t" style="left:666.45px;width:400px;text-align:center;top:592.24px;font-size:12px;line-height:12px;font-weight:400;color:#aaaaaa;font-family:'Liberation Sans';letter-spacing:0.35px">13:00</div>
<div class="r" style="left:893.42px;top:471.48px;width:29.70px;height:108.72px;background:#d99f9e;border-radius:3px 3px 0 0"></div>
<div class="t" style="left:708.27px;width:400px;text-align:center;top:592.24px;font-size:12px;line-height:12px;font-weight:400;color:#aaaaaa;font-family:'Liberation Sans';letter-spacing:0.35px">14:00</div>
<div class="r" style="left:935.24px;top:525.84px;width:29.70px;height:54.36px;background:#d99f9e;border-radius:3px 3px 0 0"></div>
<div class="t" style="left:750.09px;width:400px;text-align:center;top:592.24px;font-size:12px;line-height:12px;font-weight:400;color:#aaaaaa;font-family:'Liberation Sans';letter-spacing:0.35px">15:00</div>
<div class="r" style="left:977.06px;top:525.84px;width:29.70px;height:54.36px;background:#d99f9e;border-radius:3px 3px 0 0"></div>
<div class="t" style="left:791.91px;width:400px;text-align:center;top:592.24px;font-size:12px;line-height:12px;font-weight:400;color:#aaaaaa;font-family:'Liberation Sans';letter-spacing:0.35px">16:00</div>
<div class="r" style="left:1018.88px;top:471.48px;width:29.70px;height:108.72px;background:#d99f9e;border-radius:3px 3px 0 0"></div>
<div class="t" style="left:833.73px;width:400px;text-align:center;top:592.24px;font-size:12px;line-height:12px;font-weight:400;color:#aaaaaa;font-family:'Liberation Sans';letter-spacing:0.35px">17:00</div>
<div class="r" style="left:1060.70px;top:471.48px;width:29.70px;height:108.72px;background:#d99f9e;border-radius:3px 3px 0 0"></div>
<div class="t" style="left:875.55px;width:400px;text-align:center;top:592.24px;font-size:12px;line-height:12px;font-weight:400;color:#aaaaaa;font-family:'Liberation Sans';letter-spacing:0.35px">18:00</div>
<div class="r" style="left:1102.52px;top:507.72px;width:29.70px;height:72.48px;background:#d99f9e;border-radius:3px 3px 0 0"></div>
<div class="t" style="left:917.37px;width:400px;text-align:center;top:592.24px;font-size:12px;line-height:12px;font-weight:400;color:#aaaaaa;font-family:'Liberation Sans';letter-spacing:0.35px">19:00</div>
<div class="r" style="left:1144.34px;top:507.72px;width:29.70px;height:72.48px;background:#d99f9e;border-radius:3px 3px 0 0"></div>
<div class="t" style="left:959.19px;width:400px;text-align:center;top:592.24px;font-size:12px;line-height:12px;font-weight:400;color:#aaaaaa;font-family:'Liberation Sans';letter-spacing:0.35px">20:00</div>
<div class="r" style="left:1186.16px;top:417.12px;width:29.70px;height:163.08px;background:#d99f9e;border-radius:3px 3px 0 0"></div>
<div class="t" style="left:1001.01px;width:400px;text-align:center;top:592.24px;font-size:12px;line-height:12px;font-weight:400;color:#aaaaaa;font-family:'Liberation Sans';letter-spacing:0.35px">21:00</div>
<div class="r" style="left:1227.98px;top:399.00px;width:29.70px;height:181.20px;background:#d99f9e;border-radius:3px 3px 0 0"></div>
<div class="t" style="left:1042.83px;width:400px;text-align:center;top:592.24px;font-size:12px;line-height:12px;font-weight:400;color:#aaaaaa;font-family:'Liberation Sans';letter-spacing:0.35px">22:00</div>
<svg class="r" style="left:174.30px;top:658.20px;" width="10" height="7" viewBox="0 0 10 7"><path d="M0 0.3 L10 0.3 L5 6.5Z" fill="#a7adad"/></svg>
<div class="t" style="left:191.00px;top:654.26px;font-size:16px;line-height:16px;font-weight:400;color:#2b2e31;font-family:'Liberation Sans';-webkit-text-stroke:0.5px #2b2e31;letter-spacing:0.66px">Validation errors</div>
<div class="t" style="left:326.00px;top:655.95px;font-size:14px;line-height:14px;font-weight:400;color:#55595c;font-family:'Liberation Sans';letter-spacing:0.2px">(top 10)</div>
<div class="r" style="left:175.5px;top:686.2px;width:1105px;height:232px;border:1px solid #e0e1e3;border-radius:6px"></div>
<div class="r" style="left:176.50px;top:732.70px;width:1103.50px;height:1.00px;background:#e0e1e3"></div>
<div class="r" style="left:176.50px;top:778.90px;width:1103.50px;height:1.00px;background:#e0e1e3"></div>
<div class="r" style="left:176.50px;top:824.70px;width:1103.50px;height:1.00px;background:#e0e1e3"></div>
<div class="r" style="left:176.50px;top:870.70px;width:1103.50px;height:1.00px;background:#e0e1e3"></div>
<div class="t" style="left:200.00px;top:705.16px;font-size:16px;line-height:16px;font-weight:400;color:#25282b;font-family:'Liberation Sans';-webkit-text-stroke:0.5px #25282b;letter-spacing:0.65px">Location</div>
<div class="t" style="left:308.30px;top:705.16px;font-size:16px;line-height:16px;font-weight:400;color:#25282b;font-family:'Liberation Sans';-webkit-text-stroke:0.5px #25282b;letter-spacing:0.65px">Field</div>
<div class="t" style="left:552.50px;top:705.16px;font-size:16px;line-height:16px;font-weight:400;color:#25282b;font-family:'Liberation Sans';-webkit-text-stroke:0.5px #25282b;letter-spacing:0.65px">Message</div>
<div class="t" style="left:980.00px;top:705.16px;font-size:16px;line-height:16px;font-weight:400;color:#25282b;font-family:'Liberation Sans';-webkit-text-stroke:0.5px #25282b;letter-spacing:0.65px">Type</div>
<div class="t" style="left:1195.00px;top:705.16px;font-size:16px;line-height:16px;font-weight:400;color:#25282b;font-family:'Liberation Sans';-webkit-text-stroke:0.5px #25282b;letter-spacing:0.65px">Count</div>
<div class="t" style="left:200.00px;top:748.26px;font-size:16px;line-height:16px;font-weight:400;color:#2a2d31;font-family:'Liberation Sans';letter-spacing:0.3px">Body</div>
<div class="t" style="left:308.30px;top:749.95px;font-size:14px;line-height:14px;font-weight:400;color:#a84444;font-family:'Liberation Mono';">delivery_address.street</div>
<div class="t" style="left:552.50px;top:748.26px;font-size:16px;line-height:16px;font-weight:400;color:#2a2d31;font-family:'Liberation Sans';letter-spacing:0.37px">field required</div>
<div class="t" style="left:980.00px;top:749.95px;font-size:14px;line-height:14px;font-weight:400;color:#a84444;font-family:'Liberation Mono';">value_error.missing</div>
<div class="t" style="left:1195.00px;top:748.26px;font-size:16px;line-height:16px;font-weight:400;color:#2a2d31;font-family:'Liberation Sans';letter-spacing:0.3px">19</div>
<div class="t" style="left:200.00px;top:794.46px;font-size:16px;line-height:16px;font-weight:400;color:#2a2d31;font-family:'Liberation Sans';letter-spacing:0.3px">Body</div>
<div class="t" style="left:308.30px;top:796.15px;font-size:14px;line-height:14px;font-weight:400;color:#a84444;font-family:'Liberation Mono';">order_date</div>
<div class="t" style="left:552.50px;top:794.46px;font-size:16px;line-height:16px;font-weight:400;color:#2a2d31;font-family:'Liberation Sans';letter-spacing:0.37px">date string does not match format '%Y-%m-%d'</div>
<div class="t" style="left:980.00px;top:796.15px;font-size:14px;line-height:14px;font-weight:400;color:#a84444;font-family:'Liberation Mono';">value_error.datetime</div>
<div class="t" style="left:1195.00px;top:794.46px;font-size:16px;line-height:16px;font-weight:400;color:#2a2d31;font-family:'Liberation Sans';letter-spacing:0.3px">16</div>
<div class="t" style="left:200.00px;top:840.26px;font-size:16px;line-height:16px;font-weight:400;color:#2a2d31;font-family:'Liberation Sans';letter-spacing:0.3px">Body</div>
<div class="t" style="left:308.30px;top:841.95px;font-size:14px;line-height:14px;font-weight:400;color:#a84444;font-family:'Liberation Mono';">delivery_address.state</div>
<div class="t" style="left:552.50px;top:840.26px;font-size:16px;line-height:16px;font-weight:400;color:#2a2d31;font-family:'Liberation Sans';letter-spacing:0.37px">state not valid</div>
<div class="t" style="left:980.00px;top:841.95px;font-size:14px;line-height:14px;font-weight:400;color:#a84444;font-family:'Liberation Mono';">value_error</div>
<div class="t" style="left:1195.00px;top:840.26px;font-size:16px;line-height:16px;font-weight:400;color:#2a2d31;font-family:'Liberation Sans';letter-spacing:0.3px">9</div>
<div class="t" style="left:200.00px;top:887.16px;font-size:16px;line-height:16px;font-weight:400;color:#2a2d31;font-family:'Liberation Sans';letter-spacing:0.3px">Body</div>
<div class="t" style="left:308.30px;top:888.85px;font-size:14px;line-height:14px;font-weight:400;color:#a84444;font-family:'Liberation Mono';">customer_id</div>
<div class="t" style="left:552.50px;top:887.16px;font-size:16px;line-height:16px;font-weight:400;color:#2a2d31;font-family:'Liberation Sans';letter-spacing:0.37px">field required</div>
<div class="t" style="left:980.00px;top:888.85px;font-size:14px;line-height:14px;font-weight:400;color:#a84444;font-family:'Liberation Mono';">value_error.missing</div>
<div class="t" style="left:1195.00px;top:887.16px;font-size:16px;line-height:16px;font-weight:400;color:#2a2d31;font-family:'Liberation Sans';letter-spacing:0.3px">9</div>
<svg class="r" style="left:174.30px;top:951.50px;" width="10" height="7" viewBox="0 0 10 7"><path d="M0 0.3 L10 0.3 L5 6.5Z" fill="#a7adad"/></svg>
<div class="t" style="left:191.00px;top:946.96px;font-size:16px;line-height:16px;font-weight:400;color:#2b2e31;font-family:'Liberation Sans';-webkit-text-stroke:0.5px #2b2e31;letter-spacing:1.0px">Most recent clients</div>
</body></html>
